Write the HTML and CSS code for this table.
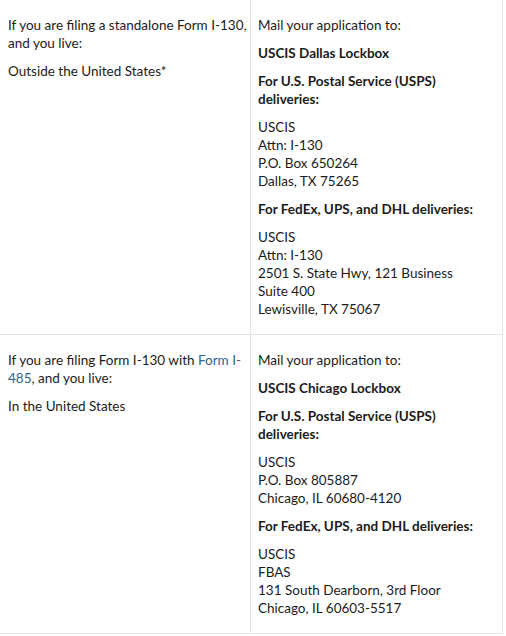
FILE: index.html
```html
<!DOCTYPE html>
<html lang="en">
<head>
<meta charset="utf-8">
<title>Where to file Form I-130</title>
<link rel="stylesheet" href="styles.css">
</head>
<body>
<div class="mail-table" role="table">
  <div class="cell cond" role="cell">
    <p><span class="nw">If you are filing a standalone Form I-130,</span><br>and you live:</p>
    <p>Outside the United States*</p>
  </div>
  <div class="cell addr" role="cell">
    <p>Mail your application to:</p>
    <p><strong>USCIS Dallas Lockbox</strong></p>
    <p><strong>For U.S. Postal Service (USPS)<br>deliveries:</strong></p>
    <p>USCIS<br>Attn: I-130<br>P.O. Box 650264<br>Dallas, TX 75265</p>
    <p><strong>For FedEx, UPS, and DHL deliveries:</strong></p>
    <p>USCIS<br>Attn: I-130<br>2501 S. State Hwy, 121 Business<br>Suite 400<br>Lewisville, TX 75067</p>
  </div>
  <div class="cell cond" role="cell">
    <p><span class="nw">If you are filing Form I-130 with <a href="#">Form I-</a></span><br><a href="#">485</a>, and you live:</p>
    <p>In the United States</p>
  </div>
  <div class="cell addr" role="cell">
    <p>Mail your application to:</p>
    <p><strong>USCIS Chicago Lockbox</strong></p>
    <p><strong>For U.S. Postal Service (USPS)<br>deliveries:</strong></p>
    <p>USCIS<br>P.O. Box 805887<br>Chicago, IL 60680-4120</p>
    <p><strong>For FedEx, UPS, and DHL deliveries:</strong></p>
    <p>USCIS<br>FBAS<br>131 South Dearborn, 3rd Floor<br>Chicago, IL 60603-5517</p>
  </div>
</div>
</body>
</html>
```

FILE: styles.css
```css
html, body {
  margin: 0;
  padding: 0;
  background: #ffffff;
}

body {
  font-family: Lato, "Liberation Sans", sans-serif;
  font-size: 13.5px;
  line-height: 18px;
  color: #1b1b1b;
}

.mail-table {
  display: grid;
  grid-template-columns: 251px 252px;
  width: 503px;
}

.cell {
  box-sizing: border-box;
  padding: 6px 8px;
  border-right: 1px solid #e4e4e4;
  border-bottom: 1px solid #e4e4e4;
}

.addr {
  padding-left: 7px;
}

.cell p {
  margin: 10px 0;
}

.nw {
  white-space: nowrap;
}

.cell strong {
  font-weight: 700;
}

.cell a {
  color: #2a6496;
  text-decoration: none;
}
```
